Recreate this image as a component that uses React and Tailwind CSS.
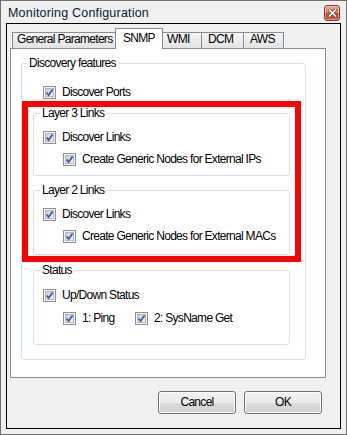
import React from "react";

function Check() {
  return (
    <svg width="13" height="13" viewBox="0 0 13 13" className="block shrink-0">
      <defs>
        <linearGradient id="cbg" x1="0" y1="0" x2="1" y2="1">
          <stop offset="0" stopColor="#c9ccd1" />
          <stop offset="1" stopColor="#f4f4f4" />
        </linearGradient>
      </defs>
      <rect x="0.5" y="0.5" width="12" height="12" fill="#f6f6f6" stroke="#8f8f8f" />
      <rect x="2.5" y="2.5" width="8" height="8" fill="url(#cbg)" stroke="#b3b6ba" />
      <path d="M3.6 6.4 L5.6 9 L9.6 3.6" fill="none" stroke="#3f57a0" strokeWidth="1.7" />
    </svg>
  );
}

function Row({ label, className = "" }) {
  return (
    <div className={`flex items-center h-[13px] ${className}`}>
      <Check />
      <span className="ml-[6px] leading-[13px] whitespace-nowrap">{label}</span>
    </div>
  );
}

function Group({ label, className = "", legendClass = "ml-[6px]", children }) {
  return (
    <fieldset className={`border border-[#d5dfe5] rounded-[3px] ${className}`}>
      <legend className={`${legendClass} px-[2px] leading-[13px] whitespace-nowrap`}>{label}</legend>
      {children}
    </fieldset>
  );
}

function CloseBtn() {
  return (
    <div className="w-[16px] h-[16px] rounded-[3px] border border-[#8b3b2c] bg-[linear-gradient(to_bottom,#eca58f_0%,#e0836a_45%,#c8422a_55%,#d05a40_100%)] shadow-[inset_0_0_0_1px_rgba(255,255,255,0.35)] flex items-center justify-center">
      <svg width="9" height="8" viewBox="0 0 9 8">
        <path d="M1.5 1 L7.5 7 M7.5 1 L1.5 7" stroke="#4a4a4a" strokeWidth="3" strokeLinecap="square" />
        <path d="M1.5 1 L7.5 7 M7.5 1 L1.5 7" stroke="#ffffff" strokeWidth="1.6" strokeLinecap="square" />
      </svg>
    </div>
  );
}

const tabBase =
  "h-[16px] -ml-px border-l border-t border-r border-[#898c95] bg-[linear-gradient(to_bottom,#f5f5f5,#e3e3e3)] leading-[13px] whitespace-nowrap";

export default function App() {
  return (
    <div className="w-[347px] h-[435px] border border-[#6e6e6e] bg-[#f0f0f0] flex flex-col font-['Liberation_Sans',Arial,sans-serif] text-[12px] tracking-[-0.7px] text-black">
      <div className="h-[22px] shrink-0 flex justify-between items-start pl-[7px] pr-[6px] pt-[4px]">
        <span className="text-[12.5px] leading-[16px] tracking-[0.2px] text-[#0b1a33]">
          Monitoring Configuration
        </span>
        <CloseBtn />
      </div>

      <div className="mx-[5px] h-[406px] shrink-0 border border-black bg-[#f0f0f0] flex flex-col pt-[4px]">
        <div className="h-[20px] shrink-0 flex items-end pl-[6px]">
          <div className={`${tabBase} w-[104px] pl-[4px]`}>General Parameters</div>
          <div className="h-[21px] w-[48px] -ml-px -mb-px relative z-10 border-l border-t border-r border-[#898c95] bg-white pl-[7px] pt-[2px] leading-[14px]">
            SNMP
          </div>
          <div className={`${tabBase} w-[40px] pl-[4px]`}>WMI</div>
          <div className={`${tabBase} w-[43px] pl-[6px]`}>DCM</div>
          <div className={`${tabBase} w-[41px] pl-[6px]`}>AWS</div>
        </div>

        <div className="ml-[3px] w-[316px] h-[330px] shrink-0 border border-[#898c95] bg-white pt-[8px]">
          <Group label="Discovery features" className="ml-[10px] w-[285px] pb-[14px]" legendClass="ml-[5px]">
            <Row label="Discover Ports" className="mt-[16px] ml-[21px]" />
            <div className="mt-[2px] w-[279px] border-[6px] border-[#ff0000] pl-[5px] pb-[1px]">
              <Group label="Layer 3 Links" className="w-[257px] pb-[9px]">
                <Row label="Discover Links" className="mt-[11px] ml-[9px]" />
                <Row label="Create Generic Nodes for External IPs" className="mt-[9px] ml-[29px]" />
              </Group>
              <Group label="Layer 2 Links" className="mt-[8px] w-[257px] pb-[11px]">
                <Row label="Discover Links" className="mt-[11px] ml-[9px]" />
                <Row label="Create Generic Nodes for External MACs" className="mt-[9px] ml-[29px]" />
              </Group>
            </div>
            <Group label="Status" className="mt-[2px] ml-[11px] w-[257px] pb-[19px]">
              <Row label="Up/Down Status" className="mt-[12px] ml-[9px]" />
              <div className="flex mt-[10px] ml-[29px]">
                <Row label="1: Ping" className="w-[72px]" />
                <Row label="2: SysName Get" />
              </div>
            </Group>
          </Group>
        </div>

        <div className="mt-[13px] flex justify-end gap-[8px] pr-[18px]">
          <button className="w-[78px] h-[23px] rounded-[3px] border border-[#707070] bg-[linear-gradient(to_bottom,#f2f2f2_0%,#ebebeb_50%,#dddddd_50%,#cfcfcf_100%)] shadow-[inset_0_0_0_1px_#fbfbfb] leading-[13px]">
            Cancel
          </button>
          <button className="w-[78px] h-[23px] rounded-[3px] border border-[#707070] bg-[linear-gradient(to_bottom,#f2f2f2_0%,#ebebeb_50%,#dddddd_50%,#cfcfcf_100%)] shadow-[inset_0_0_0_1px_#fbfbfb] leading-[13px]">
            OK
          </button>
        </div>
      </div>
    </div>
  );
}
